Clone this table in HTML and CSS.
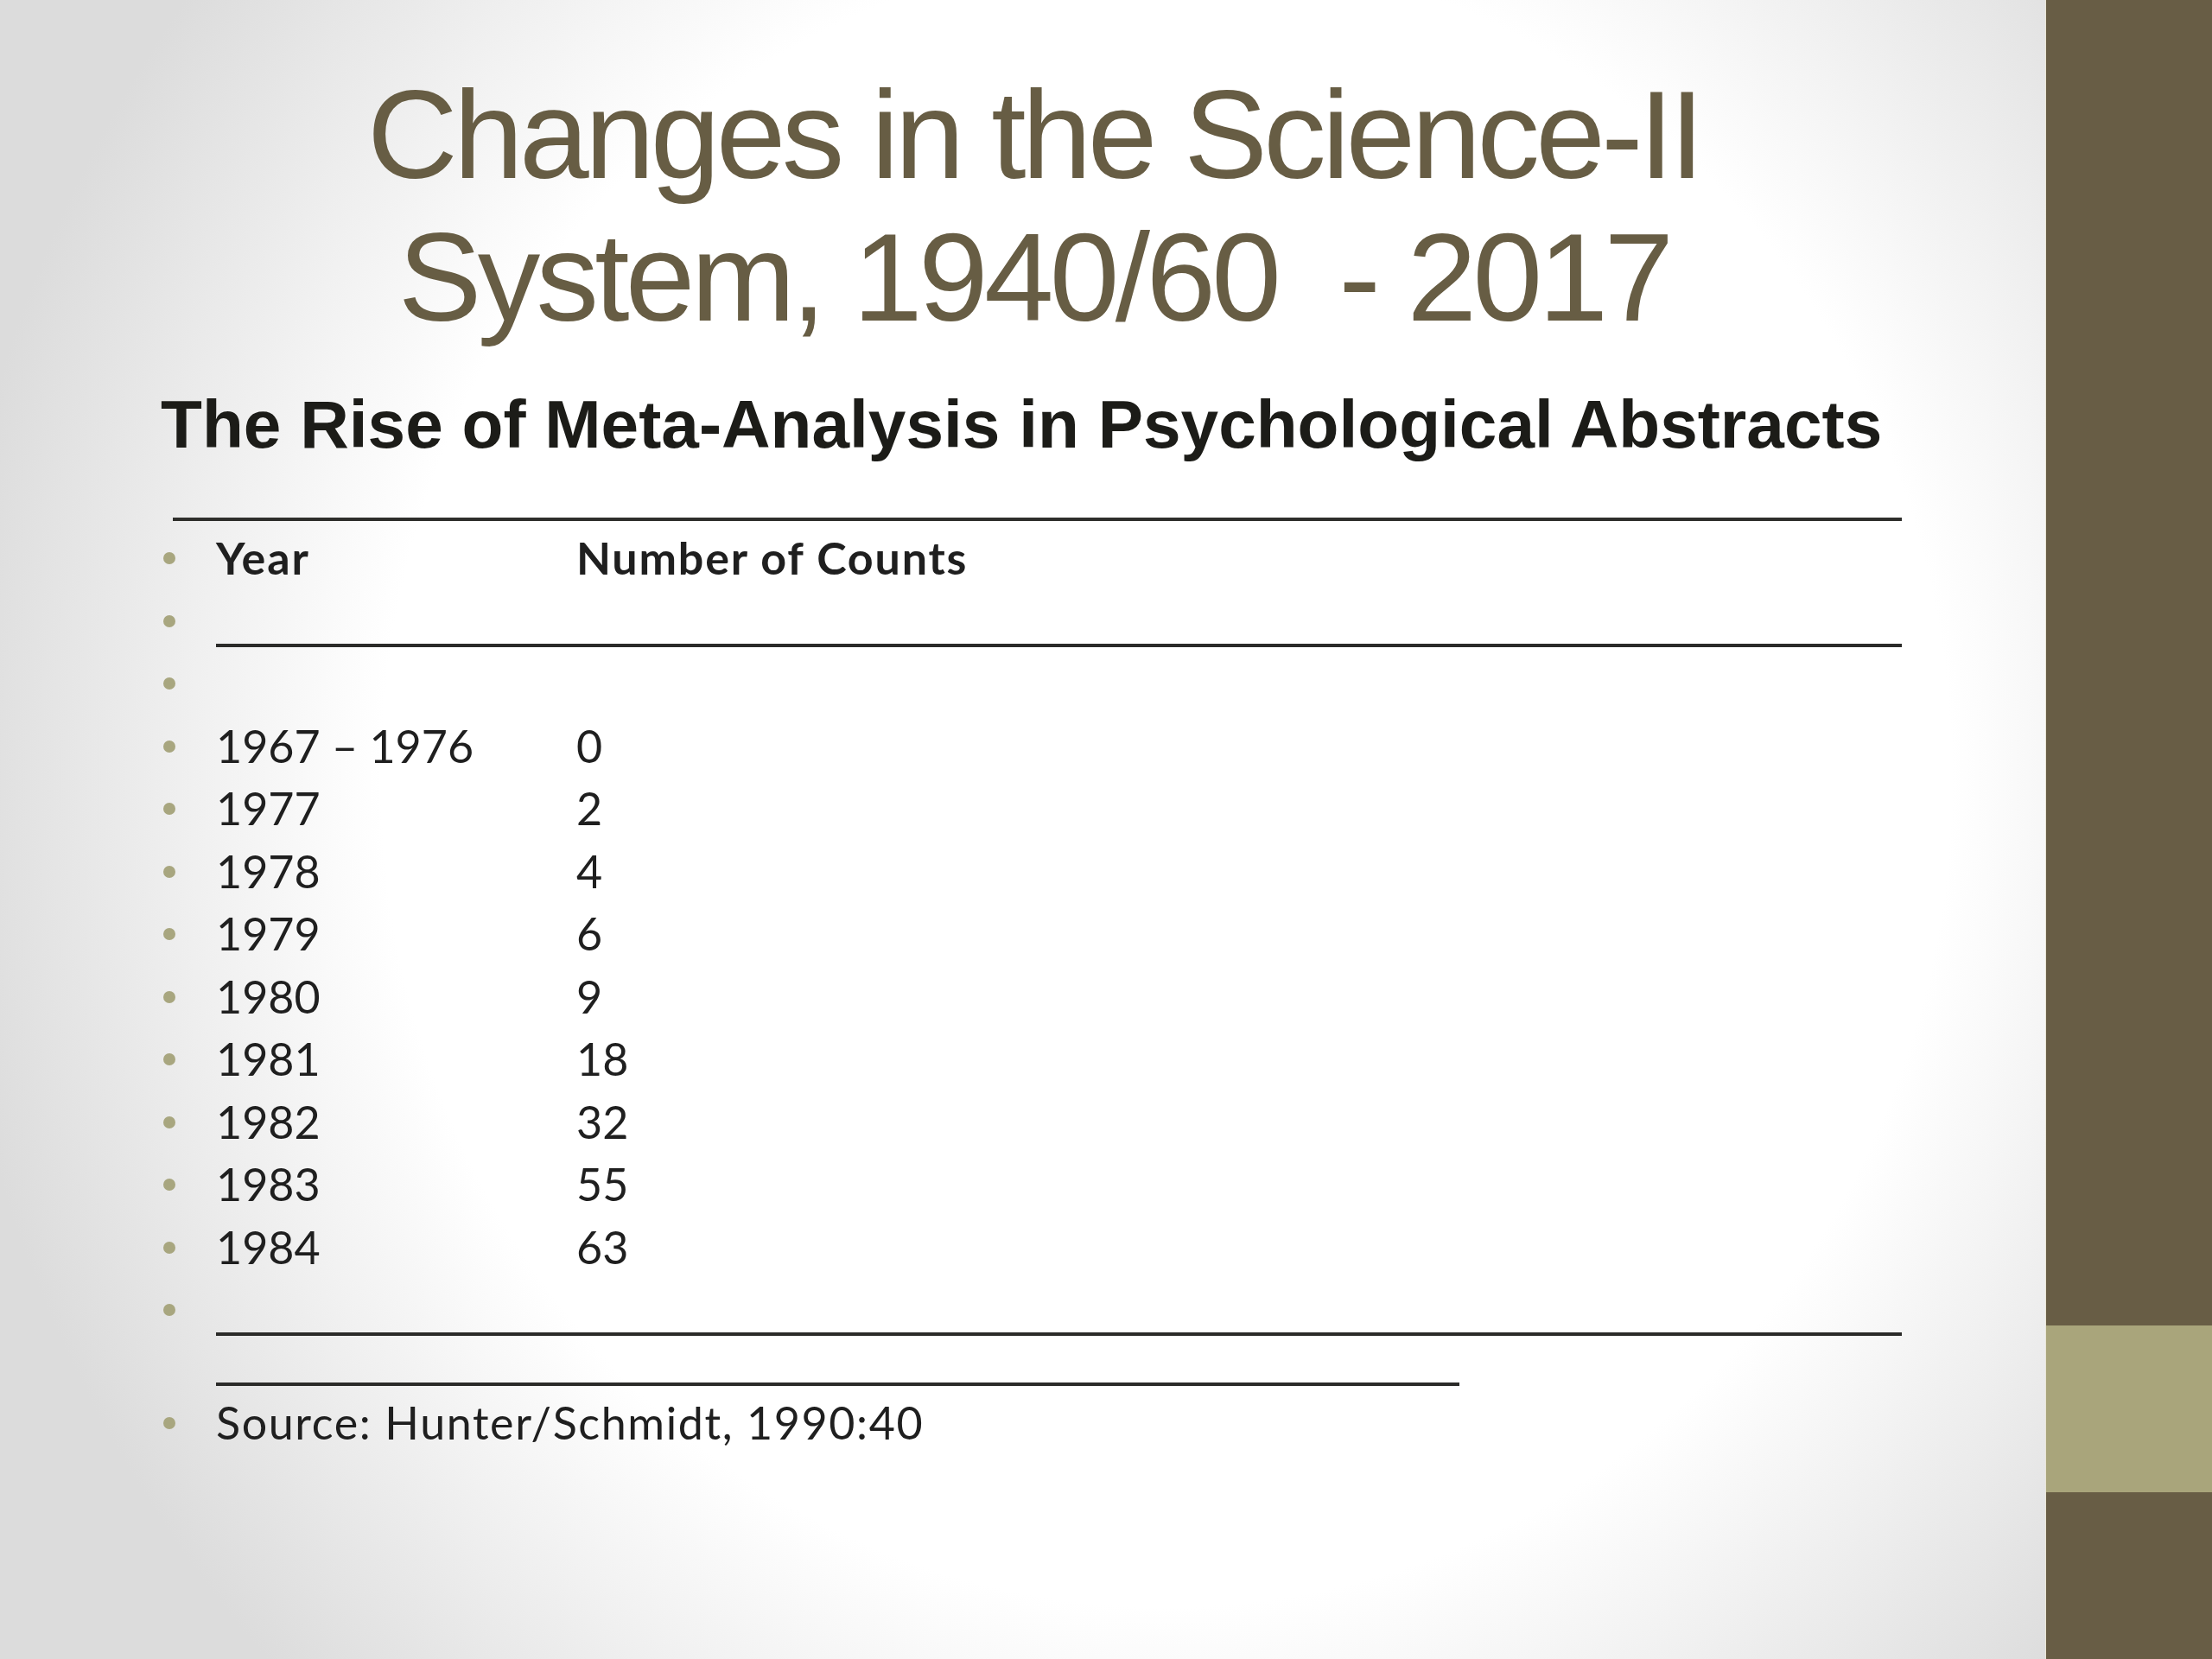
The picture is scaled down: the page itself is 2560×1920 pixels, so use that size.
FILE: index.html
```html
<!DOCTYPE html>
<html lang="en">
<head>
<meta charset="utf-8">
<title>Changes in the Science-II System</title>
<link rel="stylesheet" href="styles.css">
</head>
<body>
<div class="slide">
  <main class="content">
    <h1 class="title">Changes in the Science-II<br>System, 1940/60&nbsp; - 2017</h1>
    <h2 class="subtitle">The Rise of Meta-Analysis in Psychological Abstracts</h2>
    <div class="rule-top"></div>
    <ul class="list">
      <li class="row head"><span class="dot"></span><span class="yr">Year</span><span class="ct">Number of Counts</span></li>
      <li class="row"><span class="dot"></span><span class="lines"><span class="uline full"></span></span></li>
      <li class="row"><span class="dot"></span><span class="yr">&nbsp;</span></li>
      <li class="row"><span class="dot"></span><span class="yr">1967 – 1976</span><span class="ct">0</span></li>
      <li class="row"><span class="dot"></span><span class="yr">1977</span><span class="ct">2</span></li>
      <li class="row"><span class="dot"></span><span class="yr">1978</span><span class="ct">4</span></li>
      <li class="row"><span class="dot"></span><span class="yr">1979</span><span class="ct">6</span></li>
      <li class="row"><span class="dot"></span><span class="yr">1980</span><span class="ct">9</span></li>
      <li class="row"><span class="dot"></span><span class="yr">1981</span><span class="ct">18</span></li>
      <li class="row"><span class="dot"></span><span class="yr">1982</span><span class="ct">32</span></li>
      <li class="row"><span class="dot"></span><span class="yr">1983</span><span class="ct">55</span></li>
      <li class="row"><span class="dot"></span><span class="yr">1984</span><span class="ct">63</span></li>
      <li class="row"><span class="dot"></span><span class="lines"><span class="uline full"></span><span class="uline part"></span></span></li>
      <li class="row"><span class="dot"></span><span class="src">Source: Hunter/Schmidt, 1990:40</span></li>
    </ul>
  </main>
  <aside class="bar">
    <div class="bar-dark"></div>
    <div class="bar-light"></div>
    <div class="bar-dark bar-rest"></div>
  </aside>
</div>
</body>
</html>
```

FILE: styles.css
```css
html, body {
  margin: 0;
  padding: 0;
}

body {
  width: 2560px;
  height: 1920px;
  overflow: hidden;
}

.slide {
  display: flex;
  width: 2560px;
  height: 1920px;
}

.content {
  flex: 1;
  min-width: 0;
  background: radial-gradient(ellipse 1420px 1500px at 1350px 900px, #ffffff 64%, #dcdcdc 100%);
  display: flex;
  flex-direction: column;
}

.title {
  margin: 74px 0 0 0;
  padding-left: 26px;
  font-family: "Liberation Sans", Arial, sans-serif;
  font-weight: normal;
  font-size: 145px;
  line-height: 165px;
  letter-spacing: -4.7px;
  color: #675d44;
  text-align: center;
}

.subtitle {
  margin: 42px 0 0 186px;
  font-family: "Liberation Sans", Arial, sans-serif;
  font-weight: bold;
  font-size: 78.4px;
  line-height: 90px;
  color: #1c1c18;
}

.rule-top {
  margin: 63px 0 0 200px;
  width: 2001px;
  height: 4px;
  background: #2e2e2b;
}

.list {
  list-style: none;
  margin: 13px 0 0 189px;
  padding: 0;
  font-family: Lato, "Open Sans", sans-serif;
  font-size: 52px;
  line-height: 58px;
  color: #1f1f1f;
}

.row {
  display: flex;
  align-items: flex-start;
  margin-bottom: 14.5px;
}

.dot {
  flex: none;
  width: 14px;
  height: 14px;
  margin-top: 23px;
  margin-right: 47px;
  border-radius: 50%;
  background: #a8a67f;
}

.yr {
  flex: none;
  width: 417px;
  white-space: pre;
}

.ct {
  flex: none;
}

.head {
  font-weight: bold;
  letter-spacing: 1.8px;
}

.lines {
  display: flex;
  flex-direction: column;
}

.uline {
  display: block;
  height: 60px;
  margin-bottom: -2px;
  box-sizing: border-box;
  border-bottom: 4px solid #2b2b29;
}

.uline.full {
  width: 1951px;
}

.uline.part {
  width: 1439px;
}

.src {
  white-space: nowrap;
  letter-spacing: 1.6px;
}

.bar {
  flex: none;
  width: 193px;
  display: flex;
  flex-direction: column;
  border-left: 1px solid #e9e5d6;
  box-sizing: border-box;
}

.bar-dark {
  height: 1534px;
  background: #685d45;
}

.bar-light {
  height: 193px;
  background: #a9a57b;
}

.bar-rest {
  flex: 1;
  height: auto;
}
```
